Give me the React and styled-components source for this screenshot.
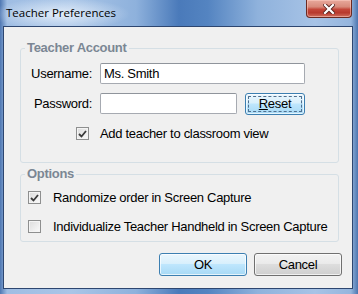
import { createGlobalStyle } from "styled-components";
import styled from "styled-components";

const GlobalStyle = createGlobalStyle`
  html, body {
    margin: 0;
    padding: 0;
    background: #6f96c8;
  }
  body {
    font-family: "Liberation Sans", Arial, sans-serif;
    letter-spacing: -0.3px;
  }
`;

const Frame = styled.div`
  width: 358px;
  height: 294px;
  box-sizing: border-box;
  display: flex;
  flex-direction: column;
  padding: 0 5px 5px 3px;
  background:
    radial-gradient(ellipse 70px 16px at 60px 14px, rgba(235, 243, 252, 0.85), rgba(235, 243, 252, 0) 100%),
    linear-gradient(90deg, #4f78b3 0%, #9fbde3 2%, #a9c5e7 20%, #8eb1dc 38%, #4a7aba 50%, #5484c1 58%, #8fb2dc 72%, #a7c3e6 88%, #95b5dd 98%, #4d76af 100%);
`;

const TitleBar = styled.div`
  height: 26px;
  display: flex;
  align-items: flex-start;
  justify-content: space-between;
  padding-left: 3px;
`;

const Title = styled.div`
  font-family: "Open Sans", "Noto Sans", sans-serif;
  font-size: 11.5px;
  letter-spacing: 0;
  line-height: 26px;
  color: #000;
`;

const CloseButton = styled.div`
  width: 46px;
  height: 18px;
  box-sizing: border-box;
  margin-right: 1px;
  border: 1px solid #6b2a22;
  border-top: none;
  border-radius: 0 0 4px 4px;
  background: linear-gradient(180deg, #e8a99c 0%, #d88a7b 40%, #c4473a 55%, #b8392d 75%, #d0705f 100%);
  box-shadow: inset 0 0 0 1px rgba(255, 210, 200, 0.5);
  display: flex;
  align-items: center;
  justify-content: center;
`;

const Client = styled.div`
  flex: 1;
  border: 1px solid #2d4670;
  background: #f0f0f0;
  display: flex;
  flex-direction: column;
  padding: 0 13px 0 16px;
`;

const Group = styled.fieldset`
  margin: ${(p) => p.$top}px 0 0 0;
  padding: 8px 7px ${(p) => p.$bottom}px 7px;
  border: 1px solid #d5dfe5;
  border-radius: 3px;
  min-width: 0;
`;

const Legend = styled.legend`
  font-weight: bold;
  font-size: 13px;
  line-height: 14px;
  color: #7b8794;
  padding: 0 2px;
  margin-left: -3px;
`;

const AccountGrid = styled.div`
  display: grid;
  grid-template-columns: 64px 137px 60px;
  column-gap: 8px;
  row-gap: 9px;
  grid-auto-rows: 21px;
  align-items: center;
`;

const Label = styled.label`
  font-size: 13px;
  color: #000;
  justify-self: end;
  white-space: nowrap;
`;

const TextInput = styled.div`
  grid-column: ${(p) => p.$span};
  height: 21px;
  box-sizing: border-box;
  border: 1px solid #a6aab1;
  border-top-color: #8f949b;
  border-radius: 2px;
  background: #fff;
  padding-left: 3px;
  font-size: 13px;
  line-height: 19px;
  color: #000;
`;

const Button = styled.div`
  height: ${(p) => p.$h}px;
  box-sizing: border-box;
  border: 1px solid ${(p) => (p.$blue ? "#3c7fb1" : "#707070")};
  border-radius: 3px;
  background: ${(p) =>
    p.$blue
      ? "linear-gradient(180deg, #eaf6fd 0%, #d9f0fc 45%, #bee6fd 50%, #a7d9f5 100%)"
      : "linear-gradient(180deg, #f2f2f2 0%, #ebebeb 45%, #dddddd 50%, #cfcfcf 100%)"};
  box-shadow: inset 0 0 0 1px rgba(255, 255, 255, 0.7);
  display: flex;
  align-items: center;
  justify-content: center;
  font-size: 13px;
  color: #000;
  position: relative;
`;

const FocusRing = styled.div`
  position: absolute;
  inset: 2px;
  border: 1px dashed #4f6f8f;
  border-radius: 1px;
`;

const CheckRow = styled.div`
  grid-column: ${(p) => p.$span || "auto"};
  display: flex;
  align-items: center;
  gap: ${(p) => p.$gap || 12}px;
  height: ${(p) => p.$h || 21}px;
  font-size: 13px;
  color: #000;
  white-space: nowrap;
`;

const Box = styled.div`
  width: 13px;
  height: 13px;
  flex: none;
  box-sizing: border-box;
  border: 1px solid #8e8f8f;
  background: linear-gradient(135deg, #dcdcdc 0%, #eeeeee 60%, #fbfbfb 100%);
  box-shadow: inset 0 0 0 1px #f4f4f4;
  display: flex;
  align-items: center;
  justify-content: center;
  justify-self: end;
  margin-right: ${(p) => p.$mr || 0}px;
`;

const OptionList = styled.div`
  display: flex;
  flex-direction: column;
  gap: 12px;
`;

const ButtonRow = styled.div`
  display: flex;
  justify-content: flex-end;
  gap: 7px;
  margin-top: 11px;
  margin-right: -3px;
`;

const DialogButton = styled(Button)`
  width: 88px;
`;

const ResetButton = styled(Button)`
  width: 60px;
`;

function Check({ checked, mr }) {
  return (
    <Box $mr={mr}>
      {checked && (
        <svg width="9" height="8" viewBox="0 0 9 8">
          <path d="M1 4 L3.5 6.5 L8 1" fill="none" stroke="#3a3a3a" strokeWidth="1.8" />
        </svg>
      )}
    </Box>
  );
}

export default function App() {
  return (
    <>
      <GlobalStyle />
      <Frame>
        <TitleBar>
          <Title>Teacher Preferences</Title>
          <CloseButton>
            <svg width="12" height="10" viewBox="0 0 12 10">
              <path d="M2 1 L10 9 M10 1 L2 9" stroke="#5a2520" strokeWidth="4" strokeLinecap="square" />
              <path d="M2 1 L10 9 M10 1 L2 9" stroke="#fff" strokeWidth="2.2" strokeLinecap="square" />
            </svg>
          </CloseButton>
        </TitleBar>
        <Client>
          <Group $top={14} $bottom={18}>
            <Legend>Teacher Account</Legend>
            <AccountGrid>
              <Label>Username:</Label>
              <TextInput $span="2 / 4">Ms. Smith</TextInput>
              <Label>Password:</Label>
              <TextInput $span="2 / 3" />
              <ResetButton $h={22} $blue>
                <FocusRing />
                <span>
                  <u>R</u>eset
                </span>
              </ResetButton>
              <Check checked mr={3} />
              <CheckRow $span="2 / 4">Add teacher to classroom view</CheckRow>
            </AccountGrid>
          </Group>
          <Group $top={4} $bottom={6}>
            <Legend>Options</Legend>
            <OptionList>
              <CheckRow $h={17}>
                <Check checked />
                Randomize order in Screen Capture
              </CheckRow>
              <CheckRow $h={17}>
                <Check />
                Individualize Teacher Handheld in Screen Capture
              </CheckRow>
            </OptionList>
          </Group>
          <ButtonRow>
            <DialogButton $h={23} $blue>OK</DialogButton>
            <DialogButton $h={23}>Cancel</DialogButton>
          </ButtonRow>
        </Client>
      </Frame>
    </>
  );
}
